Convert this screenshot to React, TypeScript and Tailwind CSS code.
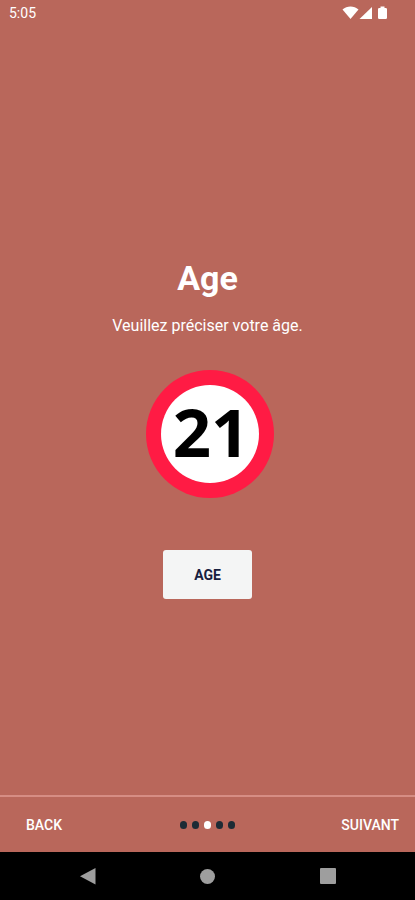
const STEPS = 5;
const CURRENT_STEP = 2;

function StatusBar() {
  return (
    <header className="flex h-[26px] items-center justify-between pr-[27px] pl-[9px] text-white">
      <span className="text-sm leading-5">5:05</span>
      <svg viewBox="0 0 46 16" className="h-4 w-[46px]" fill="currentColor" aria-hidden="true">
        {/* wifi */}
        <path d="M.500 4.600C5 .500 12 .500 16.500 4.600L8.500 14z" />
        {/* signal */}
        <path d="M30 2v12H17.500z" />
        {/* battery */}
        <path d="M38.500 1.500h4V3h1.200q1.300 0 1.300 1.300v8.400q0 1.300-1.300 1.300h-6.400q-1.300 0-1.300-1.300V4.300Q36 3 37.300 3h1.200z" />
      </svg>
    </header>
  );
}

function AgeSign() {
  return (
    <svg viewBox="0 0 132 128" className="h-32 w-[132px]" role="img" aria-label="21">
      <circle cx="68" cy="64" r="64" fill="#ff1b44" />
      <circle cx="68" cy="64" r="49" fill="#ffffff" />
      <text
        x="69"
        y="87"
        textAnchor="middle"
        fill="#000000"
        className="font-['Open_Sans','Noto_Sans',sans-serif] text-[67px] font-bold"
      >
        21
      </text>
    </svg>
  );
}

function StepDots() {
  return (
    <div className="flex items-center gap-[5px]">
      {Array.from({ length: STEPS }, (_, i) => (
        <span
          key={i}
          className={
            i === CURRENT_STEP
              ? "h-2 w-[7px] rounded-full bg-white"
              : "h-2 w-[7px] rounded-full bg-[#1d2b35]"
          }
        />
      ))}
    </div>
  );
}

function SystemNav() {
  return (
    <nav className="flex h-12 justify-center bg-black text-[#9e9e9e]">
      <button type="button" aria-label="Retour" className="flex w-[120px] items-center justify-center">
        <svg viewBox="0 0 16 18" className="h-[18px] w-4" fill="currentColor">
          <path d="M15.500 1v16.500L0 9.200z" />
        </svg>
      </button>
      <button type="button" aria-label="Accueil" className="flex w-[120px] items-center justify-center">
        <span className="size-[15px] rounded-full bg-[#9e9e9e]" />
      </button>
      <button
        type="button"
        aria-label="Applications récentes"
        className="flex w-[120px] items-center justify-center"
      >
        <span className="size-4 rounded-[1px] bg-[#9e9e9e]" />
      </button>
    </nav>
  );
}

export default function App() {
  return (
    <div className="flex min-h-screen flex-col bg-[#b9675b] font-[Roboto,'Liberation_Sans',sans-serif]">
      <StatusBar />

      <main className="flex flex-1 flex-col items-center justify-center pt-[35px] text-center text-white">
        <h1 className="text-[34px] leading-10 font-bold">Age</h1>
        <p className="mt-4 text-base leading-6">Veuillez préciser votre âge.</p>
        <div className="mt-8">
          <AgeSign />
        </div>
        <button
          type="button"
          className="mt-[52px] rounded-[3px] bg-[#f4f5f5] px-[31px] pt-[15px] pb-[14px] text-sm leading-5 font-bold text-[#17203f]"
        >
          AGE
        </button>
      </main>

      <footer className="grid h-[57px] grid-cols-[1fr_auto_1fr] items-center border-t-2 border-[#d68d84] px-4 text-sm font-medium text-white">
        <button type="button" className="pl-[10px] text-left">
          BACK
        </button>
        <StepDots />
        <button type="button" className="text-right">
          SUIVANT
        </button>
      </footer>

      <SystemNav />
    </div>
  );
}
